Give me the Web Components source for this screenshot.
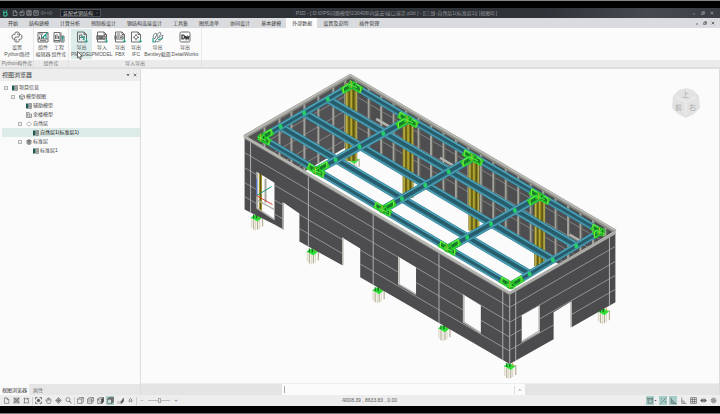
<!DOCTYPE html>
<html lang="zh-CN">
<head>
<meta charset="utf-8">
<title>P3D</title>
<style>
html,body{height:100%;margin:0}
body{font:5px/7px "Liberation Sans","Noto Sans CJK SC",sans-serif;color:#444;background:#000}
</style>
</head>
<body>
<app-shell></app-shell>
<script>
const RESET = `*{box-sizing:border-box}
button,input,select{font:inherit;color:inherit;border:0;margin:0;padding:0;background:none;border-radius:0;outline:0}
button{cursor:pointer;white-space:nowrap}`;

function define(name, html, setup) {
  customElements.define(name, class extends HTMLElement {
    constructor() {
      super();
      this.attachShadow({ mode: 'open' });
    }
    connectedCallback() {
      const body = typeof html === 'function' ? html(this) : html;
      this.shadowRoot.innerHTML = `<style>${RESET}</style>${body}`;
      if (setup) setup(this);
    }
  });
}

/* ---------- icons, drawn on a 12 x 12 grid ---------- */
const T = '#2a9d88';
const ICONS = {
  logo: `<path d="M3 1v8M3 6q0-2 3-2t3 3-3 3.500-3-3M7 2l2-1" stroke="#35c4a0" stroke-width="1.800"/>`,
  newfile: `<path d="M2.500 1.500h4.500l3 3v6.500h-7.500zM7 1.500v3h3"/>`,
  open: `<path d="M2 10.500v-7h3l1-2h3l1 2v7zM3.500 5h5"/>`,
  save: `<path d="M1.500 1.500h9v9h-9zM4 1.500v3h4v-3M3.500 10.500v-3h5v3"/>`,
  saveas: `<path d="M1.500 1.500h9v9h-9zM4 1.500v3h3M4 9l5.500-5.500"/>`,
  undo: `<path d="M1 6l4-4v2.500h6v3h-6v2.500z"/>`,
  redo: `<path d="M11 6l-4-4v2.500h-6v3h6v2.500z"/>`,
  python: `<path d="M4 3.500v-1.500q0-1 2-1t2.200 1v3q0 1-1 1H5q-1.200 0-1.200 1.300v1M3.800 3.500H2.500Q1 3.500 1 5.800t1.500 2.400h1.200v1.500q0 1.300 2.300 1.300t2.200-1.300V8.300h1.300Q11 8.300 11 6T9.500 3.500H8.200M6 3.200h1.500M4.500 9H6"/>`,
  editor: `<path d="M1 11V1.500h10V11zM1 8h10M2.500 8V5.500M4.500 8V4M6.500 8V6M3 9.700h6M2 3h4"/><path d="M5 7l6-5.500M9 4v4" stroke="${T}" stroke-width="1.200"/>`,
  library: `<path d="M1 11V1.500h6V11zM2.500 8V4M4 8V3M5.500 8V5M1 9.500h6M8 5h3v6H8zM8 1.500v3"/><path d="M8 7h3M9.500 5v5" stroke="${T}"/>`,
  pmodel: `<path d="M1.500 1h6.500l2.500 2.500V11h-9zM8 1v2.500h2.500M3.500 9V4H6v2.500H3.500M7 9l1.500-4"/><path d="M5 6h3v3M8 7l-3-1M10.500 7v4M9 9.500l1.500 1.800L12 9.500" stroke="${T}"/>`,
  importm: `<path d="M1.500 1h6.500l2.500 2.500V11h-9zM8 1v2.500h2.500"/><path d="M1 5h8v3H1zM2.500 6.500h5" stroke-width="1.300"/><path d="M10.500 7v4M9 9.500l1.500 1.800L12 9.500" stroke="${T}"/>`,
  fbx: `<path d="M1.500 1h6.500l2.500 2.500V11h-9zM8 1v2.500h2.500M3 3h3"/><path d="M1 5h8v3H1zM2 6.500h1.500M4.300 6.500h1M6 6.500h2" stroke-width="1.200"/><path d="M10.500 7v4M9 9.500l1.500 1.800L12 9.500" stroke="${T}"/>`,
  ifc: `<path d="M1.500 1h6.500l2.500 2.500V11h-9zM8 1v2.500h2.500M6 4.500a1.700 1.700 0 1 0 .1 0M6 3.200v1M6 8v1.400M3 6.300h1M8 6.300h1"/><path d="M10.500 8v3M9 9.500l1.500 1.800L12 9.500" stroke="${T}"/>`,
  bentley: `<path d="M1 6q0-3 3-4l1 2q-2 1-2 4zM5 6q0-4 3-5l1 2q-2 1-2 4zM3 10l4-4 4-2-1 4-4 3z" stroke="#7c8b8a"/><path d="M6 9l5-2M1 7v4h3" stroke="${T}" stroke-width="1.200"/>`,
  detail: `<rect x="1" y="1" width="10" height="10" rx="1.500"/><path d="M3 4v4h1q1.500 0 1.500-2T4 4zM6.300 5l.8 3 1-2.500 1 2.500.9-3" stroke-width="1.200" stroke="#333"/>`,
  leafdoc: `<path d="M0 1h5v10H0z" fill="#1f5952" stroke="none"/><path d="M6 1h5v10H6zM6 4h5M6 7.500h5M8.500 1v10" stroke="#555"/>`,
  cube: `<path d="M6 1l5 2.500v5L6 11 1 8.500v-5zM1 3.500L6 6l5-2.500M6 6v5"/><path d="M2 4v4l4 2" stroke="${T}"/>`,
  building: `<path d="M1 11V1h5v10M6 4h5v7H1M3 3v6M8 6v4"/>`,
  floor: `<path d="M1 6l3-3.500h4L11 6 8 9.500H4z" stroke="#888"/>`,
  stack: `<path d="M1 4l5-3 5 3-5 2zM1 6.500L6 8.500l5-2M1 9l5 2 5-2" fill="#888"/>`,
  gridbox: `<path d="M2 1v10M10 1v10M1 2h10M1 10h10M4 4h4v4H4zM2 2l8 8M10 2l-8 8"/>`,
  region: `<path d="M2.500 1v10M1 3h10M1 10h8M9.500 5v6M7 1l2 2-2 2"/>`,
  extents: `<path d="M1 4V1h3M8 1h3v3M11 8v3H8M4 11H1V8M3 6h6M6 3v6M4 4l4 4M8 4l-4 4" stroke-width="1.500"/>`,
  hand: `<path d="M3 7L1 5.500 2 5l2 1V2.500L6 1.500l2 1 2 1.500v4L8.500 11h-4L3 8.500zM6 2v4M8 3v3"/>`,
  pan: `<path d="M6 1l2 2.500H4zM6 11l2-2.500H4zM1 6l2.500-2v4zM11 6L8.500 4v4zM6 3v6M3 6h6"/>`,
  zoom: `<circle cx="5" cy="4.500" r="3.500"/><path d="M7.500 7l3.500 4" stroke-width="1.500"/>`,
  box1: `<path d="M1 3.500h7V11H1zM1 3.500L4 1h7v7.500L8 11M8 3.500L11 1"/>`,
  box2: `<path d="M1 3.500h7V11H1zM1 3.500L4 1h7v7.500L8 11M8 3.500L11 1M1 7h7l3-2"/>`,
  box3: `<path d="M1 3.500h7V11H1zM1 3.500L4 1h7v7.500L8 11z"/><path d="M8 3.500L11 1v7.500L8 11z" fill="#444"/>`,
  box4: `<path d="M1 3.500h7V11H1z" fill="#cfe0dd"/><path d="M1 3.500L4 1h7v7.500L8 11V3.500z" fill="#777"/>`,
  box5: `<path d="M1 8h6v3H1z" stroke="#999"/><path d="M7 8l4-6v6l-4 3z" fill="#555"/>`,
  person: `<path d="M3 6l3-4 3 4M4 6v3M8 6v3M4 7h4"/>`,
  select: `<path d="M2 2.500h7v8H2zM1 1v3M9 1v4M4 5h3"/>`,
  snap: `<path d="M1 11L11 1M3 2v2M8 8h2v2"/>`,
  angle: `<path d="M2 1v10h9M2 4l8 7M2 7q3 0 4 4"/>`,
  ortho: `<path d="M3 1v10h8M3 7h4v4"/>`,
  grid: `<path d="M1 1h10v10H1zM1 4.300h10M1 7.700h10M4.300 1v10M7.700 1v10"/>`,
  move: `<path d="M1 6l3-3v6zM11 6L8 3v6zM6 3v6M4 6h4" fill="#555"/>`,
  gear: `<circle cx="6" cy="6" r="4" stroke="#888" stroke-width="2" stroke-dasharray="2 1"/><circle cx="6" cy="6" r="3" fill="#999" stroke="#999"/>`,
  min: `<path d="M3 9h6" stroke-width="2"/>`,
  restore: `<path d="M2 5h6v6H2zM5 4V2h6v6H9" stroke-width="1.800"/>`,
  close: `<path d="M2 2l8 8M10 2l-8 8" stroke-width="2"/>`,
  up: `<path d="M2 8l4-4 4 4" stroke-width="1.500"/>`,
  down: `<path d="M1 4h10L6 9z" fill="currentColor" stroke="none"/>`
};
define('ui-icon', el => `<style>:host{display:block;width:var(--size,7px);height:var(--size,7px);flex:none}svg{display:block;width:100%;height:100%}</style>
<svg viewBox="0 0 12 12" fill="none" stroke="currentColor" aria-hidden="true">${ICONS[el.getAttribute('name')]}</svg>`);

/* ---------- title bar ---------- */
define('title-bar', `<style>
:host{display:flex;align-items:center;height:10px;padding:0 6px 0 2px;color:#a9acb0;background:linear-gradient(90deg,#2f3338 75%,#454a50 90%,#3a3f45)}
.left{display:flex;align-items:center;gap:1px}
.left button{--size:6px;width:6px;color:#c3c5c8}
.left button.dim{color:#7c8187}
.left .logo{--size:7px;width:9px}
select{appearance:none;width:41px;height:8px;margin-left:6px;padding:0 2px;background:#1c1f23;color:#b8babd;border:1px solid #4b4f55;line-height:6px}
.combo{position:relative;display:flex;align-items:center}
.combo ui-icon{position:absolute;right:3px;--size:2px}
.title{flex:1;text-align:center;white-space:pre;color:#94979b}
.right{display:flex;justify-content:flex-end;gap:5px;--size:4px}
</style>
<div class="left"><button class="logo" aria-label="P3D"><ui-icon name="logo"></ui-icon></button>
<button aria-label="新建"><ui-icon name="newfile"></ui-icon></button><button aria-label="打开"><ui-icon name="open"></ui-icon></button>
<button aria-label="保存"><ui-icon name="save"></ui-icon></button><button aria-label="另存"><ui-icon name="saveas"></ui-icon></button>
<button class="dim" aria-label="撤销"><ui-icon name="undo"></ui-icon></button><button class="dim" aria-label="重做"><ui-icon name="redo"></ui-icon></button>
<span class="combo"><select aria-label="专业模块"><option>装配式钢结构</option></select><ui-icon name="down"></ui-icon></span></div>
<span class="title">P3D - [ D:\\0\\PS问题模型\\230406\\内装云\\接口演示.p3d ] - [[三维-自然层1(标准层1)] [视图0] ]</span>
<div class="right"><button aria-label="最小化"><ui-icon name="min"></ui-icon></button><button aria-label="还原"><ui-icon name="restore"></ui-icon></button><button aria-label="关闭"><ui-icon name="close"></ui-icon></button></div>`);

/* ---------- ribbon ---------- */
const TABS = ['开始','结构建模','计算分析','预制板设计','钢结构连接设计','工具集','图纸清单','协同设计','基本建模','外部数据','设置及说明','插件管理'];
define('ribbon-tabs', `<style>
:host{display:flex;height:10px;padding:0 5px 0 2px;background:#d9dbde;color:#3b3b3d}
nav{display:flex;flex:1}
nav button{padding:0 5px 0 6px;line-height:10px}
nav button[aria-selected=true]{background:#fbfbfb}
.win{display:flex;align-items:center;gap:4px;--size:4px}
</style><nav role="tablist">${TABS.map(t => `<button role="tab" aria-selected="${t === '外部数据'}">${t}</button>`).join('')}</nav>
<div class="win"><button aria-label="最小化"><ui-icon name="min"></ui-icon></button><button aria-label="还原"><ui-icon name="restore"></ui-icon></button><button aria-label="关闭"><ui-icon name="close"></ui-icon></button></div>`);

define('ribbon-button', el => `<style>
:host{display:block;width:var(--w)}
button{display:flex;flex-direction:column;align-items:center;width:100%;height:30px;padding-top:2px;--size:12px;color:#555}
:host([active]) button{background:#dcecea}
span{display:block;line-height:7px}
ui-icon{margin-bottom:1px;color:#6c6c6c}
</style><button><ui-icon name="${el.getAttribute('icon')}"></ui-icon><span><slot name="top"></slot></span><span><slot></slot></span></button>`);

define('ribbon-group', el => `<style>
:host{display:flex;flex-direction:column}
.row{display:flex;height:32px;padding:1px var(--pad,1px);border-right:1px solid #e8e8e8}
.cap{height:7px;line-height:7px;text-align:center;color:#777;border-right:1px solid #e2e2e2}
</style><div class="row"><slot></slot></div><div class="cap">${el.getAttribute('caption')}</div>`);

const rb = (icon, a, b, w, x = '') => `<ribbon-button icon="${icon}" style="--w:${w}px" ${x}><span slot="top">${a}</span>${b}</ribbon-button>`;
define('ribbon-panel', `<style>
:host{display:flex;background:linear-gradient(#fbfbfb 32px,#ebebeb 32px);border-bottom:2px solid #dfdfdf;padding-left:1px}
.g2{--pad:1px}.g3{--pad:2px}
</style>
<ribbon-group caption="Python构件库">${rb('python','设置','Python路径',30)}</ribbon-group>
<ribbon-group class="g2" caption="组件库">${rb('editor','组件','编辑器',16)}${rb('library','工程','组件库',16)}</ribbon-group>
<ribbon-group class="g3" caption="导入导出">${rb('pmodel','导出','PMODEL',21,'active')}${rb('importm','导入','PMODEL',20)}${rb('fbx','导出','FBX',16)}${rb('ifc','导出','IFC',16)}${rb('bentley','导出','Bentley截面',27)}${rb('detail','导出','DetailWorks',28)}</ribbon-group>`);

/* ---------- view browser ---------- */
const ROWS = [[0,1,'leafdoc','项目信息'],[1,1,'cube','模型视图'],[2,0,'leafdoc','辅助模型'],[2,0,'building','全楼模型'],[2,1,'floor','自然层'],[3,0,'leafdoc','自然层1(标准层1)'],[2,1,'stack','标准层'],[3,0,'leafdoc','标准层1']];
define('view-browser', `<style>
:host{display:flex;flex-direction:column;background:#fafafa;min-width:0}
header{display:flex;align-items:center;height:12px;padding:0 3px 0 2px;background:#ededed;font-size:6px;margin-bottom:2px}
h2{flex:1;margin:0;font:inherit}
header button{--size:4px;margin-left:3px}
ul{list-style:none;margin:0;padding:0 0 0 2px;flex:1}
li{display:flex;align-items:center;height:9px;padding-left:calc(1px + 7px * var(--l))}
li[aria-selected=true]{background:#dcebe8;color:#111}
.x{width:4px;height:4px;border:1px solid #b5b5b5;background:#eee;margin:0 4px 0 1px}
.x.no{visibility:hidden}
li ui-icon{--size:6px;margin-right:1px}
footer{display:flex;height:11px;background:#e6e6e6;line-height:10px}
footer button{padding:0 2px;margin-right:2px;color:#777}
footer button.on{background:#fafafa;color:#333}
</style><header><h2>视图浏览器</h2><button aria-label="选项"><ui-icon name="down"></ui-icon></button><button aria-label="关闭"><ui-icon name="close"></ui-icon></button></header>
<ul role="tree">${ROWS.map(([l,x,i,t]) => `<li role="treeitem" style="--l:${l}" aria-selected="${t.length > 6}"><i class="x ${x ? '' : 'no'}"></i><ui-icon name="${i}"></ui-icon>${t}</li>`).join('')}</ul>
<footer><button class="on">视图浏览器</button><button>属性</button></footer>`);

/* ---------- building model ---------- */
function drawModel() {
  const line=(a,b,c,w,x='')=>`<line x1="${a[0]}" y1="${a[1]}" x2="${b[0]}" y2="${b[1]}" stroke="${c}" stroke-width="${w}" ${x}/>`;
  const poly=(p,c,x='')=>`<polygon points="${p.map(q=>q.join()).join(' ')}" fill="${c}" ${x}/>`;
  const mix=(a,b,t)=>[a[0]+(b[0]-a[0])*t,a[1]+(b[1]-a[1])*t];
  const sh=(p,x,y)=>[p[0]+x,p[1]+y];
  let s='';
  const foot=([x,y],h=11)=>{
    let o='';
    [-5,-3,-1,1,3,6].forEach((d,i)=>{const dy=[-1,1,2,1,0,-2][i];o+=line([x+d,y+dy],[x+d,y+h-1+dy],i%2?'#b9b39a':'#dedac8',1.3)});
    return o+poly([[x-6,y-1],[x-1,y-4],[x+6,y-1],[x+1,y+3]],'#2fe23a')+line([x-3,y-4],[x-3,y],'#187820',1.2)+line([x,y-4],[x,y],'#187820',1.5)+line([x+3,y-4],[x+3,y-1],'#b8a02b',1);
  };
  /* inside faces of the two rear walls */
  s+='<g clip-path="url(#inner)">';
  s+=poly([[244,136],[350,74],[350,144],[244,206]],'#525254')+poly([[350,74],[616,230],[616,297],[350,141]],'#4e4e50');
  for(const d of [18,33,48,62]){s+=line([244,136+d],[350,74+d],'#858585',1);s+=line([350,74+d],[616,230+d],'#828282',1)}
  [264,279,291,304,318,333,345].forEach(x=>{const y=136-(x-244)*.585;s+=line([x,y],[x,y+70],'#a1a19b',2)});
  for(let x=356;x<612;x+=12.5){const y=74+(x-350)*.586;s+=line([x,y],[x,y+66],'#a2a29b',2)+line([x+1.5,y],[x+1.5,y+66],'#67675f',1)}
  [[376,148,18],[440,187,14],[570,264,12]].forEach(([x,y,w])=>{s+=line([x,y-30],[x+w,y-30+w*.586],'#b4b4ae',2.500)});
  s+=foot([353,160],9);
  /* columns */
  [[351,82,160,12],[408,119,197,11],[474,157,230,11],[540,197,266,11]].forEach(([x,a,b,w])=>{
    s+=line([x,a],[x,b],'#7c741b',w)+line([x-w/2+1.500,a],[x-w/2+1.500,b],'#bdb04c',1.500)+line([x,a],[x,b],'#b8a936',1.500)+line([x+w/2-1,a],[x+w/2-1,b],'#b5a94f',1.500)+line([x+2.500,a],[x+2.500,b],'#544f12',1)+line([x-2,a],[x-2,b],'#5f590f',1);
  });
  s+='</g>';
  /* beams */
  const beam=(a,b,w=8)=>line(a,b,'#2d7d92',w)+line(a,b,'#4fa3b8',w-1)+line(a,b,'#265c6b',w-4)+line(sh(a,0,2.200),sh(b,0,2.200),'#397f91',.8);
  const back=[[352,84],[408,119],[473,157],[540,196],[601,231]];
  const front=[[261,137],[316,170],[383,209],[448,248],[511,285]];
  const node=(i,t)=>mix(back[i],front[i],t);
  for(const t of [0,.27,.53,.79,1]){s+=beam(node(0,t),node(4,t),t===0||t===1?7:8)}
  for(let i=0;i<5;i++)s+=beam(back[i],front[i],i===0||i===4?7:8);
  for(let i=0;i<5;i++)for(const t of [.27,.53,.79]){const [x,y]=node(i,t);s+=`<ellipse cx="${x}" cy="${y}" rx="2" ry="2.500" fill="#23cd68"/>`}
  /* parapet caps */
  s+='<path d="M244 136L350 75L616 231" fill="none" stroke="#8c8c87" stroke-width="4"/><path d="M243 136L350 74L616 230" fill="none" stroke="#b8b8b2" stroke-width="2"/>';
  /* feet under the outer walls */
  [[256,218],[312,252],[378,291],[444,329],[510,367],[604,312]].forEach(p=>{s+=foot(p)});
  /* inside of the first opening */
  s+=line([260,172],[260,216],'#a69a32',3)+line([260,172],[260,216],'#5a4e19',1)+line([265,178],[265,202],'#a4a49e',2);
  /* outer wall faces */
  const FL='M244 137L510 293V364L360 277V248L342 237V265L299 241V213L283 202V229L274 224L250 212L244 209ZM256 171V208L274 219V182ZM398 256V284L416 294V267ZM463 294V322L481 333V305Z';
  const FR='M510 293L616 232V302L572 327V301L554 312V339L510 364ZM522 315V342L540 332V305Z';
  s+=`<path fill-rule="evenodd" fill="#4d4d4f" d="${FL}"/><path fill-rule="evenodd" fill="#4b4b4d" d="${FR}"/>`;
  s+=`<clipPath id="fl"><path clip-rule="evenodd" d="${FL}"/></clipPath><clipPath id="fr"><path clip-rule="evenodd" d="${FR}"/></clipPath>`;
  s+='<g clip-path="url(#fl)">';
  for(const d of [15,30,45,59])s+=line([244,137+d],[510,292+d],'#a5a5a7',.8);
  [[250,141,212],[308,174,248],[373,213,288],[439,251,328],[503,289,363]].forEach(([x,a,b])=>{s+=line([x,a],[x,b],'#b0b0b2',1)});
  s+='</g><g clip-path="url(#fr)">';
  for(const d of [14,29,43,57])s+=line([510,293+d],[616,232+d],'#a5a5a7',.8);
  [[516,286,364],[610,235,306]].forEach(([x,a,b])=>{s+=line([x,a],[x,b],'#b0b0b2',1)});
  s+='</g>'+line([510,293],[510,364],'#a9a9ab',1);
  /* opening reveals */
  s+='<g fill="none" stroke="#b3b3af" stroke-width="1.500"><path d="M257 172V208L274 219M256 199L274 209M282.500 202V229M342.500 237V265M399 257V284L416 294M464 295V322L481 333M539.500 306V331L522 341.500M571.500 302V327"/></g>';
  s+=line([244,136],[510,293],'#b5b5b0',3)+line([510,293],[616,232],'#a9a9a5',3)+line([244,138],[510,295],'#77777a',.7);
  /* connection plates */
  const joint=([x,y],ul,ur,vl,vr)=>{
    const u=[.87,.5],v=[.87,-.5],c=[x,y];let o='';
    const arm=(d,n)=>{if(!n)return'';const e=sh(c,d[0]*n,d[1]*n);const h=sh(c,d[0]*n*.85,d[1]*n*.85),g=sh(c,d[0]*n*.3,d[1]*n*.3);
      return line(c,e,'#2bd02d',7)+line(g,h,'#187b2c',3)+line(sh(g,0,-3),sh(h,0,-3),'#67f04c',1)+line(sh(h,0,-3),sh(h,0,3),'#7bec37',1)};
    o+=arm([-u[0],-u[1]],ul)+arm(u,ur)+arm([-v[0],-v[1]],vl)+arm(v,vr);
    return o+`<circle cx="${x}" cy="${y}" r="4" fill="#21b728"/>`+line([x-1,y-4],[x-1,y+3],'#aab62a',1.200)+line([x+2,y-3],[x+2,y+3],'#116a1b',1)+line([x-4,y-1],[x+5,y+3],'#60ef43',1)+line([x-4,y+2],[x+3,y-3],'#4be33a',1);
  };
  s+=joint(back[0],3,11,12,0);
  [1,2,3].forEach(i=>{s+=joint(back[i],11,11,13,0)+joint(front[i],10,9,0,14)});
  s+=joint(back[4],10,4,8,0)+joint(front[0],0,10,2,13)+joint(front[4],12,0,0,14);
  /* axis mark */
  s+=line([256,195],[256,178],'#4c72cf',1)+line([256,195],[271,186],'#17967f',1)+line([256,195],[272,204],'#d8412e',1);
  return `<clipPath id="inner"><path d="M244 136L350 73L616 230L510 293Z"/></clipPath>${s}`;
}
define('model-view', `<style>
:host{display:block;position:relative;background:#fbfbfb;min-height:0;overflow:hidden}
.scene{display:block;width:100%;height:100%}
.cube{position:absolute;right:19px;top:19px;width:28px;height:30px}
</style><svg class="scene" viewBox="141 68 578 315" role="img" aria-label="三维模型">${drawModel()}</svg>
<svg class="cube" viewBox="0 0 28 30"><path d="M14 0L21 2L27 8L28 20L22 26L14 30L6 26L0 20L1 8L7 2Z" fill="#e2e2e2"/><path d="M4 9L14 14L24 9M14 14V27" fill="none" stroke="#e9e9e9" stroke-width="2"/><g font-size="7" fill="#aaa"><text x="10" y="9">上</text><text x="3" y="22">前</text><text x="17" y="22">右</text></g></svg>`);

define('command-line', `<style>
:host{display:flex;justify-content:center;height:12px;background:#e4e4e4;border-top:1px solid #eee}
div{display:flex;width:42%;margin-right:53px;background:#fbfbfb;align-items:center}
input{flex:1;min-width:0;height:7px;margin-left:2px;border-left:1px solid #aaa;padding-left:2px}
button{width:11px;display:flex;justify-content:center;align-items:center;height:8px;border-left:1px solid #ddd;--size:4px}
</style><div><input aria-label="命令"><button aria-label="展开"><ui-icon name="up"></ui-icon></button></div>`);

/* ---------- status bar ---------- */
const tool = (i, l, on='') => `<button aria-label="${l}" class="${on}"><ui-icon name="${i}"></ui-icon></button>`;
define('status-bar', `<style>
:host{display:grid;grid-template-columns:1.06fr auto 1fr;align-items:center;height:11px;padding:0 3px 0 2px;background:#ededed;color:#555;--size:7px}
.l,.r{display:flex;align-items:center}.l{gap:2px}.r{justify-content:flex-end;gap:2px}
button{width:8px;height:9px;display:flex;align-items:center;justify-content:center}
button.on{background:#a5cec8}
.sep{width:1px;height:8px;background:#ccc;margin:0 -1px 0 0}
input{appearance:none;width:22px;height:7px;background:linear-gradient(#bbb,#bbb) 0 3px/100% 1px no-repeat}
input::-webkit-slider-thumb{appearance:none;width:3px;height:5px;background:#eee;border:1px solid #aaa}
.l button.s{width:8px;color:#777}
output{display:block}
.car{width:3px;--size:3px;margin-left:-2px}
</style><div class="l">${tool('newfile','新视图')}${tool('gridbox','全图')}${tool('region','区域')}<i class="sep"></i>${tool('extents','充满')}${tool('hand','平移')}${tool('pan','移动')}${tool('zoom','缩放')}<i class="sep"></i>${tool('box1','线框')}${tool('box2','隐藏线')}${tool('box3','着色')}${tool('box4','真实','on')}${tool('box5','阴影')}${tool('person','漫游')}<i class="sep"></i><button class="s" aria-label="缩小">−</button><input type="range" aria-label="缩放比例"><button class="s" aria-label="放大">+</button></div>
<output>-9008.39 , 8633.83 , 0.00</output>
<div class="r">${tool('select','选择','on')}<button class="car" aria-label="选择方式"><ui-icon name="down"></ui-icon></button>${tool('snap','捕捉','on')}${tool('angle','极轴','on')}${tool('ortho','正交')}${tool('grid','网格')}${tool('move','移动')}${tool('gear','设置')}</div>`);

define('app-shell', `<style>
:host{display:flex;flex-direction:column;height:100vh;border-top:1px solid #858585;border-bottom:1px solid #777;padding:7px 0;background:#000;box-sizing:border-box;position:relative}
main{flex:1;min-height:0;display:grid;grid-template-columns:140px minmax(0,1fr);gap:0 1px;background:#dcdcdc;padding-right:1px}
.work{display:grid;grid-template-rows:minmax(0,1fr) auto;min-height:0}
.pointer{position:absolute;left:77px;top:50px;width:6px;height:9px}
</style><title-bar></title-bar><ribbon-tabs></ribbon-tabs><ribbon-panel></ribbon-panel>
<main><view-browser></view-browser><section class="work"><model-view></model-view><command-line></command-line></section></main>
<status-bar></status-bar>
<svg class="pointer" viewBox="0 0 6 9"><path d="M.5.500V7L2 5.700L3 8.500L4.200 8L3.200 5.300H5.300Z" fill="#fff" stroke="#333" stroke-width=".7"/></svg>`);
</script>
</body>
</html>
